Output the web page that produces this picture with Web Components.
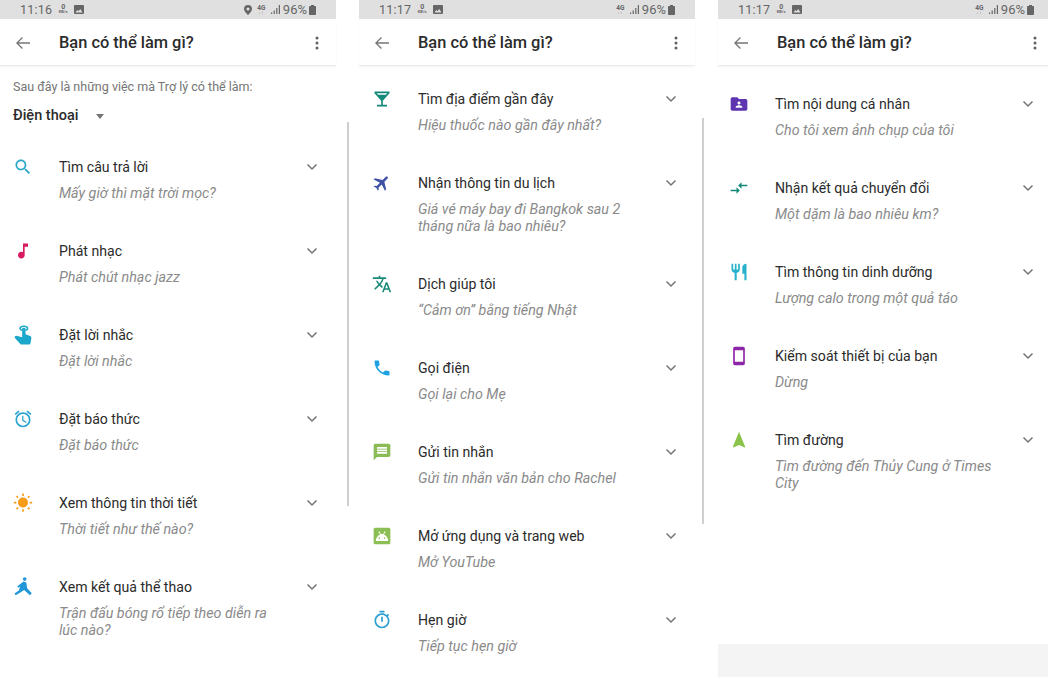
<!DOCTYPE html>
<html lang="vi">
<head>
<meta charset="utf-8">
<title>Bạn có thể làm gì?</title>
<style>
  html,body{margin:0;height:679px;overflow:hidden;background:#fff;}
  body{font-family:Roboto,"Liberation Sans",sans-serif;}
  .page{display:flex;gap:23px;width:1054px;height:679px;}
</style>
</head>
<body>
<div class="page">

  <help-screen time="11:16" location thumb-top="122" thumb-height="384" thumb-left="347">
    <help-intro>
      <span slot="text">Sau đây là những việc mà Trợ lý có thể làm:</span>
      <span slot="device">Điện thoại</span>
    </help-intro>
    <help-list top="31">
      <help-row icon="search" color="#29a9c9"><span slot="title">Tìm câu trả lời</span><span slot="sub">Mấy giờ thì mặt trời mọc?</span></help-row>
      <help-row icon="music" color="#d81b60"><span slot="title">Phát nhạc</span><span slot="sub">Phát chút nhạc jazz</span></help-row>
      <help-row icon="touch" color="#1ba6cc"><span slot="title">Đặt lời nhắc</span><span slot="sub">Đặt lời nhắc</span></help-row>
      <help-row icon="alarm" color="#2aa3cf"><span slot="title">Đặt báo thức</span><span slot="sub">Đặt báo thức</span></help-row>
      <help-row icon="sun" color="#f59c1a"><span slot="title">Xem thông tin thời tiết</span><span slot="sub">Thời tiết như thế nào?</span></help-row>
      <help-row icon="run" color="#2196d8"><span slot="title">Xem kết quả thể thao</span><span slot="sub">Trận đấu bóng rổ tiếp theo diễn ra lúc nào?</span></help-row>
    </help-list>
  </help-screen>

  <help-screen time="11:17" thumb-top="118" thumb-height="406" thumb-left="343">
    <help-list top="23">
      <help-row icon="bar" color="#14897a"><span slot="title">Tìm địa điểm gần đây</span><span slot="sub">Hiệu thuốc nào gần đây nhất?</span></help-row>
      <help-row icon="flight" color="#3f51a5"><span slot="title">Nhận thông tin du lịch</span><span slot="sub">Giá vé máy bay đi Bangkok sau 2 tháng nữa là bao nhiêu?</span></help-row>
      <help-row icon="translate" color="#1b8a78"><span slot="title">Dịch giúp tôi</span><span slot="sub">“Cảm ơn” bằng tiếng Nhật</span></help-row>
      <help-row icon="phone" color="#1ea1e0"><span slot="title">Gọi điện</span><span slot="sub">Gọi lại cho Mẹ</span></help-row>
      <help-row icon="message" color="#8bbb55"><span slot="title">Gửi tin nhắn</span><span slot="sub">Gửi tin nhắn văn bản cho Rachel</span></help-row>
      <help-row icon="android" color="#8bbf55"><span slot="title">Mở ứng dụng và trang web</span><span slot="sub">Mở YouTube</span></help-row>
      <help-row icon="timer" color="#2a9fd0"><span slot="title">Hẹn giờ</span><span slot="sub">Tiếp tục hẹn giờ</span></help-row>
    </help-list>
  </help-screen>

  <help-screen time="11:17" footer>
    <help-list top="28" shift="-2">
      <help-row icon="folder" color="#5e35b1"><span slot="title">Tìm nội dung cá nhân</span><span slot="sub">Cho tôi xem ảnh chụp của tôi</span></help-row>
      <help-row icon="compare" color="#14897a"><span slot="title">Nhận kết quả chuyển đổi</span><span slot="sub">Một dặm là bao nhiêu km?</span></help-row>
      <help-row icon="food" color="#26b2cc"><span slot="title">Tìm thông tin dinh dưỡng</span><span slot="sub">Lượng calo trong một quả táo</span></help-row>
      <help-row icon="device" color="#8e24aa"><span slot="title">Kiểm soát thiết bị của bạn</span><span slot="sub">Dừng</span></help-row>
      <help-row icon="nav" color="#8bc34a"><span slot="title">Tìm đường</span><span slot="sub">Tìm đường đến Thủy Cung ở Times City</span></help-row>
    </help-list>
  </help-screen>

</div>

<script>
const helpIcons = {
  search:'<path d="M15.5 14h-.79l-.28-.27C15.41 12.59 16 11.11 16 9.5 16 5.91 13.09 3 9.5 3S3 5.91 3 9.5 5.91 16 9.5 16c1.61 0 3.09-.59 4.23-1.57l.27.28v.79l5 4.99L20.49 19l-4.99-5zm-6 0C7.01 14 5 11.99 5 9.5S7.01 5 9.5 5 14 7.01 14 9.5 11.99 14 9.5 14z"/>',
  music:'<path d="M12 3v10.55c-.59-.34-1.27-.55-2-.55-2.21 0-4 1.79-4 4s1.79 4 4 4 4-1.79 4-4V7h4V3h-6z"/>',
  touch:'<path fill-rule="evenodd" d="M13 .5c3 0 5.500 1.400 5.500 3.300S16.800 6.900 15 7.100V5.300c1-.2 1.500-.8 1.500-1.500 0-.8-1.500-1.500-3.500-1.500s-3.500.7-3.500 1.500c0 .7.5 1.300 1.500 1.500v1.800c-1.800-.2-3.500-1.400-3.500-3.300S10 .5 13 .5z"/><path d="M11 4.500c0-.8.8-1.200 2-1.200s2 .4 2 1.200v6.700l5.500 2c1 .4 1.700 1.300 1.500 2.400l-.9 6c-.2 1-1 1.900-2 1.900h-8.600c-.7 0-1.300-.3-1.700-.8L2.300 15.500c-.8-.9.2-2.700 2-2.600l6.700 1.700z"/>',
  alarm:'<path d="M22 5.72l-4.6-3.86-1.29 1.53 4.6 3.86L22 5.72zM7.88 3.39L6.6 1.86 2 5.71l1.29 1.53 4.59-3.85zM12.5 8H11v6l4.75 2.85.75-1.23-4-2.37V8zM12 4c-4.97 0-9 4.03-9 9s4.02 9 9 9c4.97 0 9-4.03 9-9s-4.03-9-9-9zm0 16c-3.87 0-7-3.13-7-7s3.13-7 7-7 7 3.13 7 7-3.13 7-7 7z"/>',
  sun:'<path d="M6.76 4.84l-1.8-1.79-1.41 1.41 1.79 1.79 1.42-1.41zM4 10.5H1v2h3v-2zm9-9.95h-2V3.5h2V.55zm7.45 3.91l-1.41-1.41-1.79 1.79 1.41 1.41 1.79-1.79zm-3.21 13.7l1.79 1.8 1.41-1.41-1.8-1.79-1.4 1.4zM20 10.5v2h3v-2h-3zm-8-5c-3.31 0-6 2.69-6 6s2.69 6 6 6 6-2.69 6-6-2.69-6-6-6zm-1 16.95h2V19.5h-2v2.95zm-7.45-3.91l1.41 1.41 1.79-1.8-1.41-1.41-1.79 1.8z"/>',
  run:'<circle cx="14" cy="2.500" r="2.200"/><path d="M12.500 5.500l3.500 1 1 7 5.500 6-2.200 2.500-7-6.300-4.500 2.800-5.500 3.500-1.500-2.300 5.200-3.500 1.500-4.700-2.200 1.500-1.300-1.700z"/>',
  bar:'<path d="M21 5V3H3v2l8 9v5H6v2h12v-2h-5v-5l8-9zM7.43 7L5.66 5h12.69l-1.78 2H7.43z"/>',
  flight:'<g transform="rotate(45 12 12)"><path d="M21 16v-2l-8-5V3.5c0-.83-.67-1.5-1.5-1.5S10 2.67 10 3.5V9l-8 5v2l8-2.5V19l-2 1.5V22l3.5-1 3.5 1v-1.5L13 19v-5.5l8 2.5z"/></g>',
  translate:'<path d="M12.87 15.07l-2.54-2.51.03-.03c1.74-1.94 2.98-4.17 3.71-6.53H17V4h-7V2H8v2H1v1.99h11.17C11.5 7.92 10.44 9.75 9 11.35 8.07 10.32 7.3 9.19 6.69 8h-2c.73 1.63 1.73 3.17 2.98 4.56l-5.09 5.02L4 19l5-5 3.11 3.11.76-2.04zM18.5 10h-2L12 22h2l1.12-3h4.75L21 22h2l-4.5-12zm-2.62 7l1.62-4.33L19.12 17h-3.24z"/>',
  phone:'<path d="M6.62 10.79c1.44 2.83 3.76 5.14 6.59 6.59l2.2-2.2c.27-.27.67-.36 1.02-.24 1.12.37 2.33.57 3.57.57.55 0 1 .45 1 1V20c0 .55-.45 1-1 1-9.39 0-17-7.61-17-17 0-.55.45-1 1-1h3.5c.55 0 1 .45 1 1 0 1.25.2 2.45.57 3.57.11.35.03.74-.25 1.02l-2.2 2.2z"/>',
  message:'<path d="M20 2H4c-1.1 0-1.99.9-1.99 2L2 22l4-4h14c1.1 0 2-.9 2-2V4c0-1.1-.9-2-2-2zm-2 12H6v-2h12v2zm0-3H6V9h12v2zm0-3H6V6h12v2z"/>',
  android:'<rect x="2" y="2" width="20" height="20" rx="2"/><path fill="#fff" d="M4.500 18c.2-3.600 2.300-6.600 5.200-7.700L7.600 7l1-.6 2.200 3.400c.4-.1.8-.1 1.200-.1s.8 0 1.200.1l2.200-3.400 1 .6-2.100 3.300c2.900 1.100 5 4.100 5.200 7.700z"/><circle cx="8.800" cy="14.500" r="1"/><circle cx="15.200" cy="14.500" r="1"/>',
  timer:'<path d="M15 1H9v2h6V1zm-4 13h2V8h-2v6zm8.030-6.610l1.420-1.420c-.43-.51-.9-.99-1.410-1.410l-1.420 1.420C16.070 4.740 14.120 4 12 4c-4.970 0-9 4.030-9 9s4.020 9 9 9 9-4.030 9-9c0-2.120-.74-4.070-1.970-5.610zM12 20c-3.870 0-7-3.130-7-7s3.130-7 7-7 7 3.130 7 7-3.130 7-7 7z"/>',
  folder:'<path fill-rule="evenodd" d="M20 6h-8l-2-2H4c-1.100 0-1.990.9-1.990 2L2 18c0 1.100.9 2 2 2h16c1.100 0 2-.9 2-2V8c0-1.100-.9-2-2-2zm-8 3c1 0 1.800.8 1.800 1.800s-.8 1.800-1.800 1.800-1.800-.8-1.800-1.800S11 9 12 9zm4 7.500H8v-1c0-1.300 2.700-2 4-2s4 .7 4 2v1z"/>',
  compare:'<path d="M9.010 14H2v2h7.010v3L13 15l-3.990-4v3zm5.980-1v-3H22V8h-7.010V5L11 9l3.990 4z"/>',
  food:'<path d="M11 9H9V2H7v7H5V2H3v7c0 2.120 1.660 3.840 3.750 3.970V22h2.500v-9.030C11.340 12.840 13 11.120 13 9V2h-2v7zm5-3v8h2.500v8H21V2c-2.760 0-5 2.240-5 4z"/>',
  device:'<path d="M17 1.010L7 1c-1.100 0-2 .9-2 2v18c0 1.100.9 2 2 2h10c1.100 0 2-.9 2-2V3c0-1.100-.9-1.990-2-1.990zM17 19H7V5h10v14z"/>',
  nav:'<path d="M12 2L4.500 20.290l.71.71L12 18l6.790 3 .71-.71z"/>'
};

const statusTemplate = document.createElement('template');
statusTemplate.innerHTML = `
<style>
  :host{display:flex;flex:none;align-items:center;height:19px;background:#e0e0e0;color:#666;padding:0 20px;font-size:12.500px;box-sizing:border-box;}
  .time{letter-spacing:.2px;}
  .kb{display:flex;flex-direction:column;align-items:center;margin-left:5px;width:12px;line-height:5px;font-size:7px;font-weight:700;}
  .kb small{font-size:4px;line-height:4px;}
  .pic{margin-left:5px;}
  .right{margin-left:auto;display:flex;align-items:center;}
  .g4{display:flex;flex-direction:column;align-items:center;width:9px;margin-left:5px;font-size:6.500px;line-height:6px;font-weight:700;}
  .g4 i{font-style:normal;font-size:4px;line-height:4px;letter-spacing:1px;}
  .pct{margin-left:3px;font-size:13px;}
  svg{display:block;fill:#666;}
</style>
<span class="time"></span>
<span class="kb">0<small>KB/s</small></span>
<svg class="pic" width="10" height="9" viewBox="0 0 10 9"><path fill-rule="evenodd" d="M1 0h8a1 1 0 0 1 1 1v7a1 1 0 0 1-1 1H1a1 1 0 0 1-1-1V1a1 1 0 0 1 1-1zm.500 7.500h7L6.300 4 4.500 6.200 3.300 5z"/></svg>
<span class="right">
  <svg class="pin" width="8" height="10" viewBox="0 0 8 10"><path fill-rule="evenodd" d="M4 0a4 4 0 0 1 4 4c0 2.500-4 6-4 6S0 6.500 0 4a4 4 0 0 1 4-4zm0 2.500a1.500 1.500 0 1 0 0 3 1.500 1.500 0 0 0 0-3z"/></svg>
  <span class="g4">4G<i>↓↑</i></span>
  <svg style="margin-left:5px" width="9" height="9" viewBox="0 0 9 9"><path d="M0 7.500h1.200V9H0zM2.600 5.500h1.200V9H2.600zM5.200 3h1.200v6H5.200zM7.800 0H9v9H7.800z"/></svg>
  <span class="pct">96%</span>
  <svg style="margin-left:2px" width="7" height="10" viewBox="0 0 7 10"><path d="M2 0h3v1h1.300a.7.7 0 0 1 .7.700v7.600a.7.7 0 0 1-.7.700H.7a.7.7 0 0 1-.7-.7V1.700A.7.7 0 0 1 .7 1H2z"/></svg>
</span>
`;
class StatusBar extends HTMLElement {
  constructor() {
    super();
    this.attachShadow({ mode: 'open' }).appendChild(statusTemplate.content.cloneNode(true));
  }
}
customElements.define('status-bar', StatusBar);

const appBarTemplate = document.createElement('template');
appBarTemplate.innerHTML = `
<style>
  :host{display:flex;flex:none;align-items:center;height:47px;background:#fff;box-sizing:border-box;border-bottom:1px solid #ececec;box-shadow:0 1px 2px rgba(0,0,0,.05);position:relative;padding:1px 17px 0 15px;}
  .title{margin-left:28px;font-size:16.400px;font-weight:500;color:#2b2b2b;flex:1;}
  svg{display:block;}
</style>
<svg width="16" height="16" viewBox="0 0 16 16"><path d="M15 7.200H3.600l4.300-4.300L7 2 1 8l6 6 .9-.9-4.300-4.300H15z" fill="#757575"/></svg>
<span class="title"><slot></slot></span>
<svg width="4" height="14" viewBox="0 0 4 14"><circle cx="2" cy="2" r="1.500" fill="#616161"/><circle cx="2" cy="7" r="1.500" fill="#616161"/><circle cx="2" cy="12" r="1.500" fill="#616161"/></svg>
`;
class AppBar extends HTMLElement {
  constructor() {
    super();
    this.attachShadow({ mode: 'open' }).appendChild(appBarTemplate.content.cloneNode(true));
  }
}
customElements.define('app-bar', AppBar);

const screenTemplate = document.createElement('template');
screenTemplate.innerHTML = `
<style>
  :host{display:flex;flex-direction:column;flex:0 0 336px;width:336px;height:677px;position:relative;background:#fff;}
  .body{flex:1;min-height:0;}
  .footer{display:none;flex:none;height:33px;background:#f4f4f4;}
  :host([footer]) .footer{display:block;}
  .thumb{position:absolute;width:2px;background:#cfcfcf;display:none;}
</style>
<status-bar></status-bar>
<app-bar>Bạn có thể làm gì?</app-bar>
<div class="body"><slot></slot></div>
<div class="footer"></div>
<div class="thumb"></div>
`;
class HelpScreen extends HTMLElement {
  constructor() {
    super();
    const root = this.attachShadow({ mode: 'open' });
    root.appendChild(screenTemplate.content.cloneNode(true));
    const bar = root.querySelector('status-bar');
    bar.shadowRoot.querySelector('.time').textContent = this.getAttribute('time');
    bar.shadowRoot.querySelector('.pin').style.visibility = this.hasAttribute('location') ? 'visible' : 'hidden';
    if (this.hasAttribute('thumb-top')) {
      const t = root.querySelector('.thumb');
      t.style.display = 'block';
      t.style.top = this.getAttribute('thumb-top') + 'px';
      t.style.height = this.getAttribute('thumb-height') + 'px';
      t.style.left = this.getAttribute('thumb-left') + 'px';
    }
  }
}
customElements.define('help-screen', HelpScreen);

const introTemplate = document.createElement('template');
introTemplate.innerHTML = `
<style>
  :host{display:block;padding:13px 13px 0;}
  .text{font-size:12.500px;line-height:16px;color:#757575;}
  .device{display:flex;align-items:center;margin-top:11px;font-size:14.500px;line-height:20px;font-weight:500;color:#2b2b2b;}
  .arrow{width:0;height:0;margin-left:18px;border:4.500px solid transparent;border-top:5px solid #757575;border-bottom:0;}
</style>
<div class="text"><slot name="text"></slot></div>
<div class="device"><slot name="device"></slot><span class="arrow"></span></div>
`;
class HelpIntro extends HTMLElement {
  constructor() {
    super();
    this.attachShadow({ mode: 'open' }).appendChild(introTemplate.content.cloneNode(true));
  }
}
customElements.define('help-intro', HelpIntro);

const listTemplate = document.createElement('template');
listTemplate.innerHTML = `
<style>
  :host{display:block;}
  .list{display:flex;flex-direction:column;}
</style>
<div class="list"><slot></slot></div>
`;
class HelpList extends HTMLElement {
  constructor() {
    super();
    const root = this.attachShadow({ mode: 'open' });
    root.appendChild(listTemplate.content.cloneNode(true));
    const list = root.querySelector('.list');
    list.style.paddingTop = this.getAttribute('top') + 'px';
    list.style.marginLeft = (this.getAttribute('shift') || 0) + 'px';
  }
}
customElements.define('help-list', HelpList);

const rowTemplate = document.createElement('template');
rowTemplate.innerHTML = `
<style>
  :host{display:grid;grid-template-columns:46px 245px 16px;padding:0 0 39px 13px;}
  svg{display:block;}
  .icon{width:20px;height:20px;}
  .title{font-size:14.100px;line-height:20px;color:#2b2b2b;}
  .sub{margin-top:8px;max-width:222px;font-size:14.300px;line-height:17px;font-style:italic;color:#8a8a8a;}
  .chev{margin-top:2px;}
</style>
<svg class="icon" viewBox="0 0 24 24"></svg>
<div>
  <div class="title"><slot name="title"></slot></div>
  <div class="sub"><slot name="sub"></slot></div>
</div>
<svg class="chev" width="16" height="16" viewBox="0 0 16 16"><path d="M3.500 5.500L8 10l4.500-4.500" fill="none" stroke="#757575" stroke-width="1.500"/></svg>
`;
class HelpRow extends HTMLElement {
  constructor() {
    super();
    const root = this.attachShadow({ mode: 'open' });
    root.appendChild(rowTemplate.content.cloneNode(true));
    const icon = root.querySelector('.icon');
    icon.innerHTML = helpIcons[this.getAttribute('icon')];
    icon.style.fill = this.getAttribute('color');
  }
}
customElements.define('help-row', HelpRow);
</script>
</body>
</html>
